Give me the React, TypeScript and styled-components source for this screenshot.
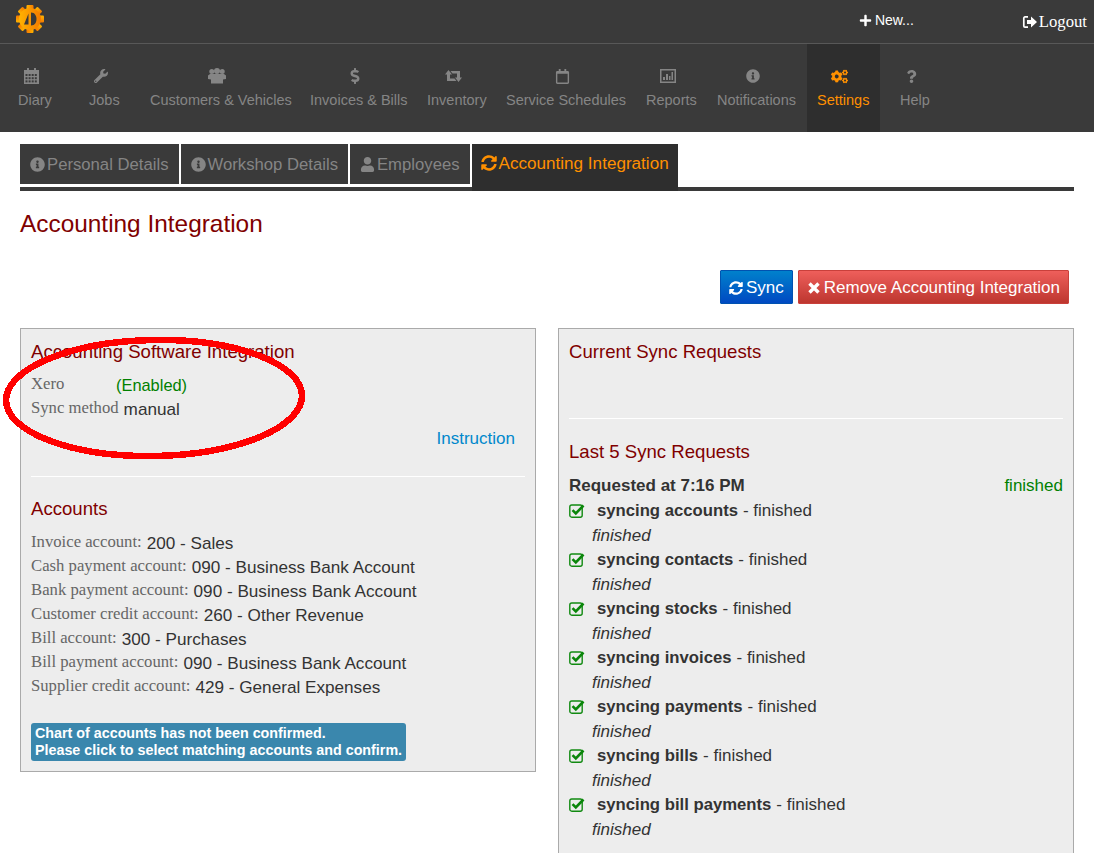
import React from 'react';
import styled, { createGlobalStyle } from 'styled-components';
import {
  FaWrench,
  FaDollarSign,
  FaRegCalendar,
  FaInfoCircle,
  FaCogs,
  FaQuestion,
  FaUser,
  FaSyncAlt,
  FaPlus,
} from 'react-icons/fa';

const GlobalStyle = createGlobalStyle`
  html, body {
    margin: 0;
    padding: 0;
    background: #fff;
    overflow: hidden;
  }
  body {
    font-family: "Liberation Sans", Arial, sans-serif;
    font-size: 17px;
    color: #333;
  }
`;

const Page = styled.div`
  position: relative;
  width: 1094px;
  height: 853px;
  overflow: hidden;
`;

const TopBar = styled.header`
  display: flex;
  align-items: flex-start;
  height: 43px;
  background: #3a3a3a;
  border-bottom: 1px solid #585858;
  color: #fff;
`;

const Logo = styled.svg`
  width: 30px;
  height: 30px;
  margin: 4px 0 0 15px;
`;

const NewLink = styled.a`
  display: flex;
  align-items: center;
  gap: 3px;
  margin-left: auto;
  margin-top: 12px;
  font-size: 14px;
  line-height: 16px;
`;

const LogoutLink = styled.a`
  display: flex;
  align-items: center;
  gap: 2px;
  margin: 13px 7px 0 108px;
  font-family: "Liberation Serif", "Times New Roman", serif;
  font-size: 16.7px;
  line-height: 18px;
`;

const Nav = styled.nav`
  display: flex;
  height: 88px;
  padding-left: 8px;
  background: #3a3a3a;
`;

const NavItem = styled.a<{ $active?: boolean; $width: number; $after?: number }>`
  box-sizing: border-box;
  width: ${(p) => p.$width}px;
  margin-right: ${(p) => p.$after ?? 0}px;
  padding: 24px 0 0 10px;
  background: ${(p) => (p.$active ? '#2e2e2e' : 'transparent')};
  color: ${(p) => (p.$active ? '#ff9000' : '#858585')};
  font-size: 14.5px;
  line-height: 20px;
`;

const NavInner = styled.span`
  display: flex;
  flex-direction: column;
  align-items: center;
  width: fit-content;
  white-space: nowrap;
`;

const NavIcon = styled.span`
  display: flex;
  align-items: center;
  justify-content: center;
  height: 16px;
  margin: 0 7px 6px 0;
`;

const Content = styled.main`
  padding: 12px 20px 0;
`;

const Tabs = styled.div`
  display: flex;
  gap: 2px;
  height: 47px;
  background: linear-gradient(#3a3a3a, #3a3a3a) left bottom / 100% 4px no-repeat;
`;

const Tab = styled.a<{ $active?: boolean }>`
  display: flex;
  align-items: center;
  gap: 2px;
  box-sizing: border-box;
  height: ${(p) => (p.$active ? 47 : 40)}px;
  padding: ${(p) => (p.$active ? '0 9px 7px' : '2px 10px 0')};
  background: ${(p) => (p.$active ? '#2e2e2e' : '#3a3a3a')};
  color: ${(p) => (p.$active ? '#ff9000' : '#858585')};
  font-size: ${(p) => (p.$active ? 17.1 : 16.7)}px;
  box-shadow: ${(p) => (p.$active ? 'none' : '0 3px 0 #fff')};
  svg {
    flex: none;
    width: ${(p) => (p.$active ? 16 : 15)}px;
    height: ${(p) => (p.$active ? 16 : 15)}px;
    margin-top: -2px;
  }
`;

const PageTitle = styled.h1`
  margin: 19px 0 0;
  font-size: 24.4px;
  line-height: 28px;
  font-weight: 400;
  color: #800000;
`;

const Actions = styled.div`
  display: flex;
  justify-content: flex-end;
  gap: 5px;
  margin: 32px 5px 0 0;
`;

const ActionButton = styled.button<{ $tone: 'blue' | 'red' }>`
  display: flex;
  align-items: center;
  gap: 3px;
  height: 34px;
  padding: 1px 8px 0;
  border: 1px solid ${(p) => (p.$tone === 'blue' ? '#0052b0' : '#c9403b')};
  border-radius: 1px;
  background: ${(p) =>
    p.$tone === 'blue'
      ? 'linear-gradient(#0081cc, #0049c2)'
      : 'linear-gradient(#ee5f5b, #bd362f)'};
  color: #fff;
  font-family: inherit;
  font-size: 17px;
  svg {
    width: 14px;
    height: 14px;
  }
`;

const Columns = styled.div`
  display: flex;
  align-items: flex-start;
  justify-content: space-between;
  margin-top: 24px;
`;

const Panel = styled.section<{ $bottom: number }>`
  box-sizing: border-box;
  width: 516px;
  padding: 13px 10px ${(p) => p.$bottom}px;
  background: #ededed;
  border: 1px solid #aaa;
`;

const PanelTitle = styled.h3`
  margin: 0;
  font-size: 18.6px;
  line-height: 20px;
  font-weight: 400;
  color: #800000;
`;

const Divider = styled.hr<{ $top: number; $bottom: number }>`
  margin: ${(p) => p.$top}px 0 ${(p) => p.$bottom}px;
  border: 0;
  border-top: 1px solid #fff;
`;

const InfoList = styled.div<{ $top: number }>`
  margin-top: ${(p) => p.$top}px;
`;

const InfoRow = styled.div`
  display: flex;
  align-items: flex-start;
  height: 24px;
  font-size: 17.15px;
  line-height: 24px;
  color: #333;
`;

const Label = styled.span<{ $width?: number }>`
  width: ${(p) => (p.$width ? `${p.$width}px` : 'auto')};
  margin-right: 5px;
  font-family: "Liberation Serif", "Times New Roman", serif;
  font-size: 16.7px;
  line-height: 21px;
  color: #666;
`;

const Enabled = styled.span`
  font-size: 16.4px;
  color: #008000;
`;

const InstructionRow = styled.div`
  margin: 6px 10px 0 0;
  text-align: right;
  line-height: 24px;
  color: #0088cc;
`;

const Notice = styled.a`
  display: inline-block;
  margin-top: 24px;
  padding: 2px 4px;
  border-radius: 3px;
  background: #3a87ad;
  color: #fff;
  font-size: 14.3px;
  line-height: 17px;
  font-weight: 700;
`;

const RequestHead = styled.div`
  display: flex;
  justify-content: space-between;
  margin: 12px 0 1px;
  line-height: 24px;
  font-weight: 700;
  span {
    font-weight: 400;
    color: #008000;
  }
`;

const StepTitle = styled.div`
  display: flex;
  align-items: center;
  height: 24px;
  line-height: 24px;
  strong {
    margin-right: 5px;
    font-size: 16.7px;
  }
  svg {
    width: 16px;
    height: 16px;
    margin: -2px 12px 0 0;
  }
`;

const StepNote = styled.div`
  height: 25px;
  line-height: 25px;
  padding-left: 23px;
  font-style: italic;
`;

const Annotation = styled.svg`
  position: absolute;
  left: 0;
  top: 330px;
  width: 312px;
  height: 135px;
  pointer-events: none;
`;

const CalendarGridIcon = () => (
  <svg width="15" height="16" viewBox="0 0 15 16">
    <path d="M3 0h2v2h5V0h2v2h3v14H0V2h3z" fill="currentColor" />
    {[0, 1, 2, 3].map((col) =>
      [0, 1, 2].map((row) => (
        <rect key={`${col}-${row}`} x={1.5 + col * 3.1} y={6 + row * 3.2} width="2" height="2" fill="#3a3a3a" />
      )),
    )}
  </svg>
);

const GroupIcon = () => (
  <svg width="18" height="16" viewBox="0 0 18 16" fill="currentColor">
    <circle cx="3.800" cy="3.500" r="2.500" />
    <circle cx="14.200" cy="3.500" r="2.500" />
    <circle cx="9" cy="3" r="3" />
    <path d="M0 7.500l2-1.500h14l2 1.500V11l-3 .5V15.500H3V11.500L0 11z" />
  </svg>
);

const RetweetIcon = () => (
  <svg width="17" height="12" viewBox="0 0 17 12" fill="currentColor">
    <path d="M3.500 0L7 4.500H5V8.500H9.500L11.500 11H2V4.500H0z" />
    <path d="M13.500 12L10 7.500H12V3.500H7.500L5.500 1H15V7.500H17z" />
  </svg>
);

const ChartIcon = () => (
  <svg width="16" height="14" viewBox="0 0 16 14">
    <rect x="0.750" y="0.750" width="14.500" height="12.500" fill="none" stroke="currentColor" strokeWidth="1.500" />
    <path d="M3 8h2v3H3zM6 5h2v6H6zM9 7h1.500v4H9zM11.500 3H13v8h-1.500z" fill="currentColor" />
  </svg>
);

const CheckIcon = () => (
  <svg viewBox="0 0 16 16">
    <rect x="0.800" y="3" width="12.400" height="12.200" rx="2" fill="none" stroke="#118a11" strokeWidth="1.400" />
    <path d="M3.500 8.200L6.800 11.500L14.500 3.500" fill="none" stroke="#0a860a" strokeWidth="2.600" />
  </svg>
);

const LogoutIcon = () => (
  <svg width="15" height="14" viewBox="0 0 15 14" fill="#fff">
    <path d="M6 1.900H3A1.200 1.200 0 0 0 1.800 3.100v7.800A1.200 1.200 0 0 0 3 12.100h3" fill="none" stroke="#fff" strokeWidth="1.700" />
    <path d="M5 5h4V1.500L15 7l-6 5.500V9H5z" />
  </svg>
);

const CrossIcon = () => (
  <svg viewBox="0 0 14 14">
    <path d="M2.500 2.500L11.500 11.500M11.500 2.500L2.500 11.500" fill="none" stroke="#fff" strokeWidth="3.400" />
  </svg>
);

const navItems = [
  { label: 'Diary', icon: <CalendarGridIcon />, width: 71 },
  { label: 'Jobs', icon: <FaWrench size={14} />, width: 61 },
  { label: 'Customers & Vehicles', icon: <GroupIcon />, width: 160 },
  { label: 'Invoices & Bills', icon: <FaDollarSign size={16} />, width: 117 },
  { label: 'Inventory', icon: <RetweetIcon />, width: 79 },
  { label: 'Service Schedules', icon: <FaRegCalendar size={15} />, width: 140 },
  { label: 'Reports', icon: <ChartIcon />, width: 71 },
  { label: 'Notifications', icon: <FaInfoCircle size={14} />, width: 100 },
  { label: 'Settings', icon: <FaCogs size={17} />, width: 73, active: true, after: 10 },
  { label: 'Help', icon: <FaQuestion size={13} />, width: 70 },
];

const accounts = [
  ['Invoice account:', '200 - Sales'],
  ['Cash payment account:', '090 - Business Bank Account'],
  ['Bank payment account:', '090 - Business Bank Account'],
  ['Customer credit account:', '260 - Other Revenue'],
  ['Bill account:', '300 - Purchases'],
  ['Bill payment account:', '090 - Business Bank Account'],
  ['Supplier credit account:', '429 - General Expenses'],
];

const steps = ['accounts', 'contacts', 'stocks', 'invoices', 'payments', 'bills', 'bill payments'];

const teeth = [0, 45, 90, 135, 180, 225, 270, 315];

const App: React.FC = () => {
  return (
    <Page>
      <GlobalStyle />
      <TopBar>
        <Logo viewBox="0 0 30 30">
          <defs>
            <linearGradient id="gear" x1="0" y1="0" x2="1" y2="0">
              <stop offset="0" stopColor="#ffb400" />
              <stop offset="1" stopColor="#f57a00" />
            </linearGradient>
          </defs>
          <g fill="url(#gear)">
            {teeth.map((a) => (
              <rect key={a} x="11.500" y="1" width="7" height="6" rx="1" transform={`rotate(${a} 15 15)`} />
            ))}
            <circle cx="15" cy="15" r="11" />
          </g>
          <path d="M16 8.500c4 0 5.500 3.500 5.500 6.500s-1.500 6.500-5.500 6.500z" fill="#3a3a3a" />
          <path d="M13.500 9.500L9 20.500h4.500z" fill="#3a3a3a" />
        </Logo>
        <NewLink>
          <FaPlus size={13} />
          New...
        </NewLink>
        <LogoutLink>
          <LogoutIcon />
          Logout
        </LogoutLink>
      </TopBar>
      <Nav>
        {navItems.map((item) => (
          <NavItem key={item.label} $active={item.active} $width={item.width} $after={item.after}>
            <NavInner>
              <NavIcon>{item.icon}</NavIcon>
              {item.label}
            </NavInner>
          </NavItem>
        ))}
      </Nav>
      <Content>
        <Tabs>
          <Tab><FaInfoCircle />Personal Details</Tab>
          <Tab><FaInfoCircle />Workshop Details</Tab>
          <Tab><FaUser />Employees</Tab>
          <Tab $active><FaSyncAlt />Accounting Integration</Tab>
        </Tabs>
        <PageTitle>Accounting Integration</PageTitle>
        <Actions>
          <ActionButton $tone="blue"><FaSyncAlt />Sync</ActionButton>
          <ActionButton $tone="red"><CrossIcon />Remove Accounting Integration</ActionButton>
        </Actions>
        <Columns>
          <Panel $bottom={10}>
            <PanelTitle>Accounting Software Integration</PanelTitle>
            <InfoList $top={11}>
              <InfoRow><Label $width={80}>Xero</Label><Enabled>(Enabled)</Enabled></InfoRow>
              <InfoRow><Label>Sync method</Label>manual</InfoRow>
            </InfoList>
            <InstructionRow>Instruction</InstructionRow>
            <Divider $top={25} $bottom={22} />
            <PanelTitle>Accounts</PanelTitle>
            <InfoList $top={12}>
              {accounts.map(([label, value]) => (
                <InfoRow key={label}><Label>{label}</Label>{value}</InfoRow>
              ))}
            </InfoList>
            <Notice>
              Chart of accounts has not been confirmed.
              <br />
              Please click to select matching accounts and confirm.
            </Notice>
          </Panel>
          <Panel $bottom={30}>
            <PanelTitle>Current Sync Requests</PanelTitle>
            <Divider $top={56} $bottom={23} />
            <PanelTitle>Last 5 Sync Requests</PanelTitle>
            <RequestHead>
              Requested at 7:16 PM
              <span>finished</span>
            </RequestHead>
            {steps.map((step) => (
              <div key={step}>
                <StepTitle>
                  <CheckIcon />
                  <strong>syncing {step}</strong>
                  <span>- finished</span>
                </StepTitle>
                <StepNote>finished</StepNote>
              </div>
            ))}
          </Panel>
        </Columns>
      </Content>
      <Annotation viewBox="0 0 312 135" shapeRendering="crispEdges">
        <ellipse cx="154" cy="68" rx="148" ry="58" fill="none" stroke="#ff0000" strokeWidth="6.500" transform="rotate(-1 154 68)" />
      </Annotation>
    </Page>
  );
};

export default App;
